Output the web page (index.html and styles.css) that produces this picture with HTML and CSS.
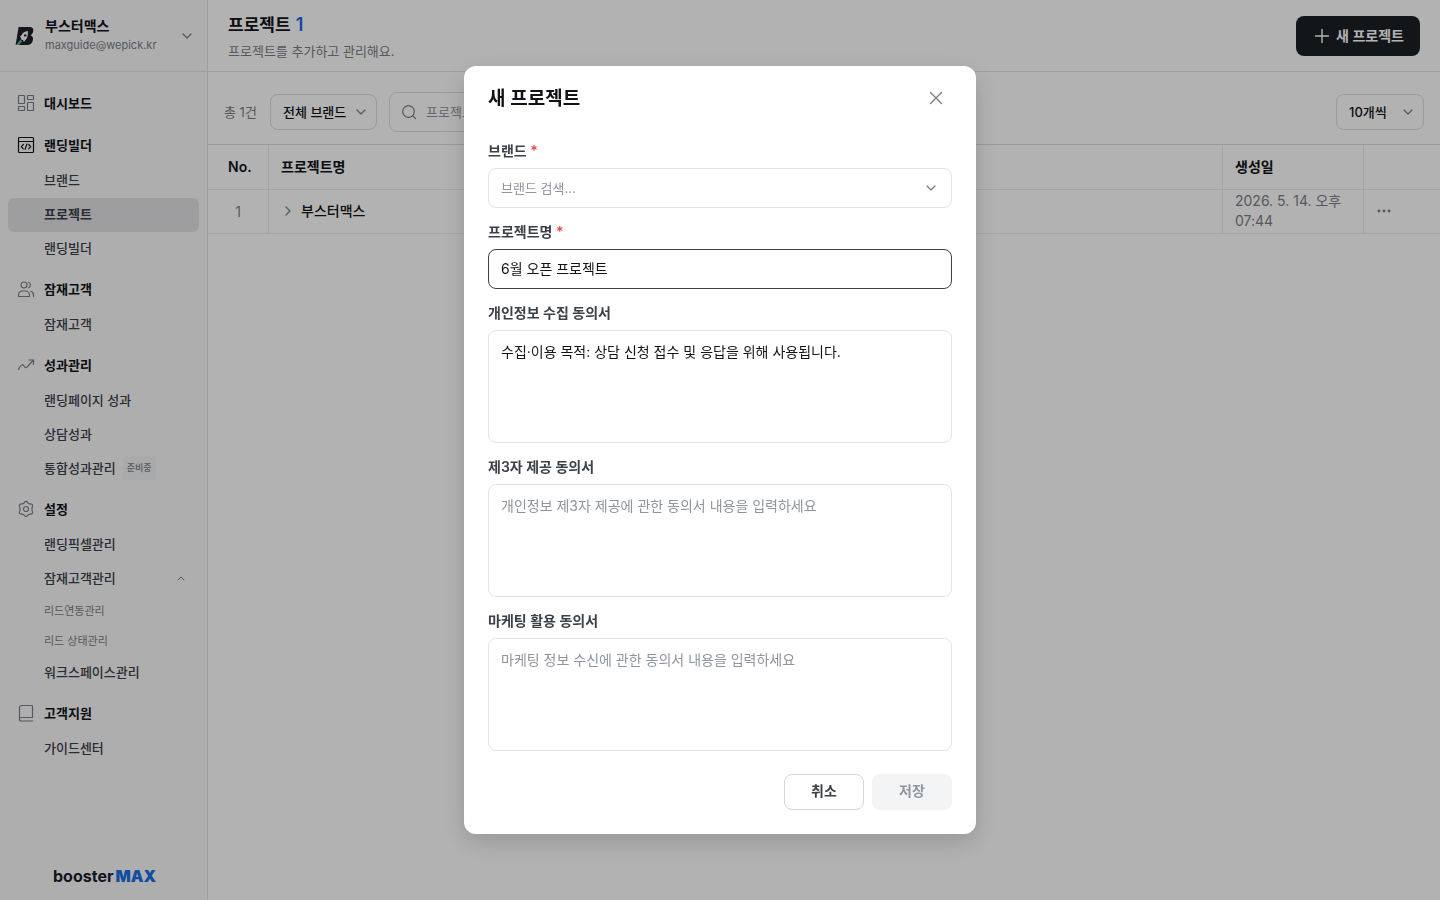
FILE: index.html
```html
<!DOCTYPE html>
<html lang="ko">
<head>
<meta charset="utf-8">
<meta name="viewport" content="width=device-width, initial-scale=1">
<title>프로젝트</title>
<link rel="stylesheet" href="styles.css">
</head>
<body>
<div class="app">
  <aside class="sidebar">
    <button class="workspace" type="button">
      <svg class="workspace-logo" viewBox="0 0 20 20" aria-hidden="true">
        <path d="M3.6 1H14.500C17.600 1 18.800 2.800 18.200 5.300C17.900 7 17 8.400 15.600 9.200C17.600 10 18.300 11.600 17.900 13.900C17.400 17.200 15.200 19 11.800 19H.6Z" fill="#1a1f2b"/>
        <path d="M12.800 5C9.800 5.200 7.600 6.700 6.600 9L4.900 10.800L6.100 11.900L5.900 13.600L8 14L8.900 15.900L10.500 14.100C12.400 12.400 13.300 8.500 12.800 5Z" fill="#f9f9fa"/>
        <circle cx="10.200" cy="9.400" r="1.200" fill="#1a1f2b"/>
        <path d="M5.400 13.800L7.300 15.200L4 19H1Z" fill="#54b999"/>
      </svg>
      <span class="workspace-text">
        <span class="workspace-name">부스터맥스</span>
        <span class="workspace-mail">maxguide@wepick.kr</span>
      </span>
      <svg class="icon icon-small" viewBox="0 0 12 12" aria-hidden="true"><path d="M2 4l4 4 4-4"/></svg>
    </button>

    <nav class="nav" aria-label="주 메뉴">
      <section class="group">
        <a class="group-title" href="#dashboard">
          <svg class="icon" viewBox="0 0 18 18" aria-hidden="true"><rect x="1.500" y="1.500" width="6" height="8" rx=".5"/><rect x="10.500" y="1.500" width="6" height="4" rx=".5"/><rect x="1.500" y="12.500" width="6" height="4" rx=".5"/><rect x="10.500" y="8.500" width="6" height="8" rx=".5"/></svg>
          대시보드</a>
      </section>
      <section class="group">
        <a class="group-title" href="#builder">
          <svg class="icon icon-dark" viewBox="0 0 18 18" aria-hidden="true"><rect x="1.500" y="1.500" width="15" height="15" rx="1"/><path d="M1.500 5.500h15M6.300 8.500L4.300 10.700l2 2.200M11.700 8.500l2 2.200-2 2.200M9.900 8l-1.800 5.400"/></svg>
          랜딩빌더</a>
        <a class="item" href="#brand">브랜드</a>
        <a class="item item-active" href="#project" aria-current="page">프로젝트</a>
        <a class="item" href="#landing">랜딩빌더</a>
      </section>
      <section class="group">
        <a class="group-title" href="#leads">
          <svg class="icon" viewBox="0 0 18 18" aria-hidden="true"><circle cx="7" cy="5" r="3"/><path d="M1.500 16.500v-1.500a4 4 0 0 1 4-4h3a4 4 0 0 1 4 4v1.500zM11.500 2.200a3 3 0 0 1 0 5.600M14 11.300a4 4 0 0 1 2.500 3.700v1.500"/></svg>
          잠재고객</a>
        <a class="item" href="#lead-list">잠재고객</a>
      </section>
      <section class="group">
        <a class="group-title" href="#performance">
          <svg class="icon" viewBox="0 0 18 18" aria-hidden="true"><path d="M1.500 13.500c2-4.500 4-6 5.500-3.500s2.500 2 4 0l5.500-6M12 4h4.500v4.500"/></svg>
          성과관리</a>
        <a class="item" href="#page-performance">랜딩페이지 성과</a>
        <a class="item" href="#consulting">상담성과</a>
        <a class="item" href="#total">통합성과관리 <span class="badge">준비중</span></a>
      </section>
      <section class="group">
        <a class="group-title" href="#settings">
          <svg class="icon" viewBox="0 0 18 18" aria-hidden="true"><circle cx="9" cy="9" r="2.500"/><path d="M7.300 2.600Q9 .2 10.700 2.600Q11.500 4 13.200 3.800Q16.300 3.900 15.400 6.500Q14.600 9 15.400 11.500Q16.300 14.100 13.200 14.200Q11.500 14 10.700 15.400Q9 17.800 7.300 15.400Q6.500 14 4.800 14.200Q1.700 14.100 2.600 11.500Q3.400 9 2.600 6.500Q1.700 3.900 4.800 3.800Q6.500 4 7.300 2.600Z"/></svg>
          설정</a>
        <a class="item" href="#pixel">랜딩픽셀관리</a>
        <a class="item item-open" href="#lead-settings">잠재고객관리
          <svg class="icon icon-mini" viewBox="0 0 10 10" aria-hidden="true"><path d="M2 7l3-3 3 3"/></svg></a>
        <a class="subitem" href="#lead-link">리드연동관리</a>
        <a class="subitem" href="#lead-status">리드 상태관리</a>
        <a class="item" href="#workspace">워크스페이스관리</a>
      </section>
      <section class="group">
        <a class="group-title" href="#support">
          <svg class="icon" viewBox="0 0 18 18" aria-hidden="true"><path d="M15.500 13.500v-11a1 1 0 0 0-1-1h-10a2 2 0 0 0-2 2v11.500a2 2 0 0 0 2 2h11M2.500 15a1.500 1.500 0 0 1 1.500-1.500h11.500"/></svg>
          고객지원</a>
        <a class="item" href="#guide">가이드센터</a>
      </section>
    </nav>

    <footer class="brandmark">booster<span class="brandmark-max">MAX</span></footer>
  </aside>

  <main class="main">
    <header class="page-header">
      <div class="page-heading">
        <h1 class="page-title">프로젝트 <span class="page-count">1</span></h1>
        <p class="page-note">프로젝트를 추가하고 관리해요.</p>
      </div>
      <button class="create" type="button">
        <svg class="icon icon-light" viewBox="0 0 16 16" aria-hidden="true"><path d="M8 1.500v13M1.500 8h13"/></svg>
        새 프로젝트
      </button>
    </header>

    <div class="toolbar">
      <span class="total">총 1건</span>
      <div class="picker">
        <select class="picker-select picker-brand" aria-label="브랜드"><option>전체 브랜드</option></select>
        <svg class="icon icon-small picker-arrow" viewBox="0 0 12 12" aria-hidden="true"><path d="M2 4l4 4 4-4"/></svg>
      </div>
      <label class="search">
        <svg class="icon icon-search" viewBox="0 0 16 16" aria-hidden="true"><circle cx="7.500" cy="7.500" r="5.800"/><path d="M11.800 11.800L14.500 14.500"/></svg>
        <input class="search-input" type="search" placeholder="프로젝트명 검색" aria-label="프로젝트명 검색">
      </label>
      <div class="picker picker-end">
        <select class="picker-select picker-size" aria-label="페이지당 개수"><option>10개씩</option></select>
        <svg class="icon icon-small picker-arrow" viewBox="0 0 12 12" aria-hidden="true"><path d="M2 4l4 4 4-4"/></svg>
      </div>
    </div>

    <table class="table">
      <thead>
        <tr><th class="col-no">No.</th><th>프로젝트명</th><th class="col-date">생성일</th><th class="col-menu"></th></tr>
      </thead>
      <tbody>
        <tr>
          <td class="col-no">1</td>
          <td class="cell-name">
            <button class="expand" type="button">
              <svg class="icon icon-small" viewBox="0 0 12 12" aria-hidden="true"><path d="M4 2l4 4-4 4"/></svg>
              부스터맥스
            </button>
          </td>
          <td class="col-date">2026. 5. 14. 오후 07:44</td>
          <td class="col-menu">
            <button class="more" type="button" aria-label="더보기">
              <svg class="more-dots" viewBox="0 0 14 4" aria-hidden="true"><circle cx="2" cy="2" r="1.400"/><circle cx="7" cy="2" r="1.400"/><circle cx="12" cy="2" r="1.400"/></svg>
            </button>
          </td>
        </tr>
      </tbody>
    </table>
  </main>
</div>

<div class="overlay">
  <form class="modal" role="dialog" aria-modal="true" aria-labelledby="modal-title">
    <header class="modal-header">
      <h2 class="modal-title" id="modal-title">새 프로젝트</h2>
      <button class="close" type="button" aria-label="닫기">
        <svg class="icon icon-close" viewBox="0 0 16 16" aria-hidden="true"><path d="M2.500 2.500l11 11M13.500 2.500l-11 11"/></svg>
      </button>
    </header>
    <div class="field">
      <label class="field-label" for="brand">브랜드 <span class="required">*</span></label>
      <div class="combo">
        <input class="control control-brand" id="brand" type="text" placeholder="브랜드 검색...">
        <svg class="icon icon-small picker-arrow combo-arrow" viewBox="0 0 12 12" aria-hidden="true"><path d="M2 4l4 4 4-4"/></svg>
      </div>
    </div>
    <div class="field">
      <label class="field-label" for="name">프로젝트명 <span class="required">*</span></label>
      <input class="control control-focused" id="name" type="text" value="6월 오픈 프로젝트">
    </div>
    <div class="field">
      <label class="field-label" for="privacy">개인정보 수집 동의서</label>
      <textarea class="control control-area" id="privacy">수집·이용 목적: 상담 신청 접수 및 응답을 위해 사용됩니다.</textarea>
    </div>
    <div class="field">
      <label class="field-label" for="third">제3자 제공 동의서</label>
      <textarea class="control control-area" id="third" placeholder="개인정보 제3자 제공에 관한 동의서 내용을 입력하세요"></textarea>
    </div>
    <div class="field">
      <label class="field-label" for="marketing">마케팅 활용 동의서</label>
      <textarea class="control control-area" id="marketing" placeholder="마케팅 정보 수신에 관한 동의서 내용을 입력하세요"></textarea>
    </div>
    <footer class="actions">
      <button class="action action-cancel" type="button">취소</button>
      <button class="action action-save" type="submit" disabled>저장</button>
    </footer>
  </form>
</div>
</body>
</html>
```
FILE: styles.css
```css
* { box-sizing: border-box; }

body {
  margin: 0;
  font-family: Inter, "Noto Sans CJK KR", sans-serif;
  font-size: 14px;
  line-height: 20px;
  color: #111318;
  background: #fff;
}

button, input, select, textarea { font: inherit; color: inherit; margin: 0; }
button { border: 0; background: none; padding: 0; cursor: pointer; }
a { color: inherit; text-decoration: none; }
h1, h2, p { margin: 0; }

.icon {
  flex: none;
  width: 18px;
  height: 18px;
  fill: none;
  stroke: #7b7f88;
  stroke-width: 1.2;
  stroke-linecap: round;
  stroke-linejoin: round;
}
.icon-dark { stroke: #111318; }
.icon-small { width: 12px; height: 12px; stroke-width: 1.3; }
.icon-mini { width: 10px; height: 10px; stroke-width: 1; }
.icon-light { width: 16px; height: 16px; stroke: #fff; stroke-width: 1.4; }
.icon-search { width: 16px; height: 16px; }
.icon-close { width: 16px; height: 16px; stroke-width: 1.4; }

.app { display: flex; min-height: 100vh; }

/* Sidebar */
.sidebar {
  display: flex;
  flex: none;
  flex-direction: column;
  width: 208px;
  background: #f9f9fa;
  border-right: 1px solid #e4e4e7;
}
.workspace {
  display: flex;
  align-items: center;
  gap: 10px;
  height: 72px;
  padding: 0 14px 0 15px;
  border-bottom: 1px solid #e4e4e7;
  text-align: left;
}
.workspace-logo { flex: none; width: 20px; height: 20px; }
.workspace-text { flex: 1; display: flex; flex-direction: column; padding-bottom: 2px; }
.workspace-name { font-weight: 600; line-height: 20px; }
.workspace-mail { font-size: 11px; line-height: 18px; color: #7b7f88; }
.nav { flex: 1; display: flex; flex-direction: column; gap: 6px; padding: 14px 8px; }
.group { display: flex; flex-direction: column; font-size: 13px; }
.group-title {
  display: flex;
  align-items: center;
  gap: 9px;
  height: 36px;
  padding: 0 0 2px 9px;
  font-weight: 600;
}
.item {
  display: flex;
  align-items: center;
  gap: 7px;
  height: 34px;
  padding: 0 13px 2px 36px;
  border-radius: 6px;
  font-weight: 500;
  color: #3c4049;
}
.item-active { background: #e2e2e5; font-weight: 600; }
.item-open { justify-content: space-between; }
.subitem {
  display: flex;
  align-items: center;
  height: 30px;
  padding-left: 36px;
  font-size: 11px;
  color: #7b7f88;
}
.badge {
  padding: 2px 4px;
  border-radius: 4px;
  background: #f3f4f6;
  font-size: 9px;
  color: #7b7f88;
}
.brandmark {
  padding: 0 0 14px 53px;
  font-size: 16px;
  font-weight: 700;
  color: #1a1d2b;
}
.brandmark-max { margin-left: 2px; font-weight: 900; color: #1a6fe8; }

/* Page */
.main { flex: 1; min-width: 0; }
.page-header {
  display: flex;
  align-items: center;
  justify-content: space-between;
  height: 72px;
  padding: 0 20px;
  border-bottom: 1px solid #e4e4e7;
}
.page-heading { padding-top: 2px; }
.page-title { font-size: 17px; line-height: 28px; font-weight: 600; }
.page-count { margin-left: 1px; font-size: 18px; color: #2563eb; }
.page-note { font-size: 13px; line-height: 24px; color: #7b7f88; }
.create {
  display: flex;
  align-items: center;
  gap: 6px;
  height: 40px;
  padding: 0 16px 0 18px;
  border-radius: 8px;
  background: #1c2024;
  color: #fff;
  font-weight: 600;
}
.toolbar {
  display: flex;
  align-items: center;
  gap: 12px;
  padding: 20px 16px 12px;
  font-size: 13px;
  border-bottom: 1px solid #dcdce0;
}
.total { min-width: 34px; color: #7b7f88; }
.picker { position: relative; display: flex; }
.picker-end { margin-left: auto; }
.picker-select {
  appearance: none;
  height: 36px;
  padding: 0 12px;
  border: 1px solid #dfdfe3;
  border-radius: 8px;
  background: #fff;
  font-weight: 500;
}
.picker-brand { width: 107px; }
.picker-size { width: 88px; }
.picker-arrow { position: absolute; right: 10px; top: 12px; pointer-events: none; }
.search {
  display: flex;
  align-items: center;
  gap: 9px;
  width: 260px;
  height: 40px;
  padding: 0 12px 0 11px;
  border: 1px solid #dfdfe3;
  border-radius: 8px;
}
.search-input { flex: 1; min-width: 0; padding: 0; border: 0; outline: 0; background: none; }
::placeholder { color: #8f949e; opacity: 1; }

.table { width: 100%; table-layout: fixed; border-collapse: separate; border-spacing: 0; }
.table th, .table td {
  height: 45px;
  padding: 0 12px;
  border-bottom: 1px solid #ececef;
  border-right: 1px solid #ececef;
  text-align: left;
}
.table td { height: 44px; padding-top: 1px; padding-bottom: 2px; color: #7b7f88; }
.table th { font-weight: 600; }
.table th:last-child, .table td:last-child { border-right: 0; }
.table .col-no { width: 61px; padding: 0; text-align: center; }
.table th.col-no { padding-left: 20px; text-align: left; }
.table .col-date { width: 141px; }
.table .col-menu { width: 76px; }
.expand { display: flex; align-items: center; gap: 7px; padding-left: 1px; font-weight: 500; color: #111318; }
.more { display: flex; padding: 4px 1px; }
.more-dots { width: 14px; height: 4px; fill: #7b7f88; }

/* Dialog */
.overlay {
  position: fixed;
  inset: 0;
  display: flex;
  align-items: center;
  justify-content: center;
  background: rgba(0, 0, 0, .3);
}
.modal {
  display: flex;
  flex-direction: column;
  gap: 14px;
  width: 512px;
  padding: 16px 24px 24px;
  border-radius: 12px;
  background: #fff;
  box-shadow: 0 8px 24px rgba(0, 0, 0, .16);
}
.modal-header { display: flex; align-items: center; justify-content: space-between; height: 32px; margin-bottom: 13px; }
.modal-title { padding-top: 2px; font-size: 19px; line-height: 32px; font-weight: 600; }
.close { display: flex; padding: 8px; }
.field { display: flex; flex-direction: column; gap: 7px; }
.field-label { font-weight: 600; color: #3c4049; }
.required { color: #ef4444; }
.combo { position: relative; display: flex; }
.combo-arrow { right: 15px; top: 14px; }
.control {
  width: 100%;
  height: 40px;
  padding: 0 12px;
  border: 1px solid #e4e4e7;
  border-radius: 8px;
  outline: 0;
  background: #fff;
}
.control-brand { font-size: 13px; }
.control-focused { padding-bottom: 2px; border-color: #3c4049; }
.control-area { height: 113px; padding: 11px 12px; resize: none; }
.actions { display: flex; justify-content: flex-end; gap: 8px; margin-top: 9px; }
.action { width: 80px; height: 36px; padding-bottom: 2px; border-radius: 8px; font-weight: 600; }
.action-cancel { border: 1px solid #d3d6dc; color: #3c4049; }
.action-save { background: #f3f4f6; color: #9096a1; }
```
